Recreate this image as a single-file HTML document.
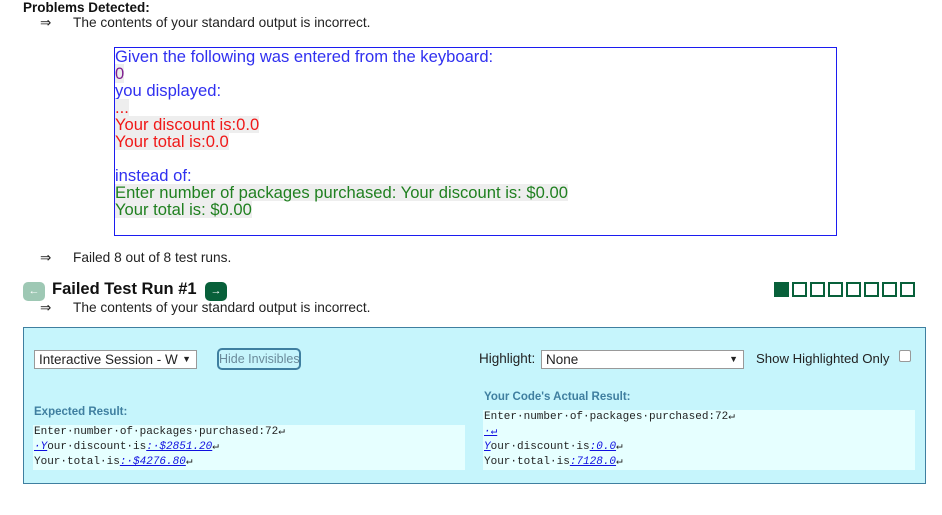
<!DOCTYPE html>
<html><head><style>
*{margin:0;padding:0;box-sizing:border-box}
body{width:942px;height:515px;background:#fff;font-family:"Liberation Sans",sans-serif;color:#222;position:relative;overflow:hidden}
.a{position:absolute;white-space:nowrap}
.t{font-size:13.7px}
.box{left:114px;top:47px;width:723px;height:189px;border:1px solid #1c1cf0;font-size:16.6px;line-height:17px;padding-top:0}
.box div{height:17px}
.bl{color:#3030f0}
.rd{color:#f01818;background:#eee;display:inline-block}
.gr{color:#208020;background:#eee;display:inline-block}
.mono{font-family:"Liberation Mono",monospace;font-size:11px;line-height:15px;background:#e6ffff;color:#222;padding-left:1px}
.u{color:#1010e0;text-decoration:underline;font-style:italic}
.lbl{font-size:11.5px;font-weight:bold;color:#3f7fa0}
.sq{position:absolute;top:282px;width:15px;height:15px;border:2px solid #08603a}
</style></head><body>
<div class="a" style="left:23px;top:0px;font-size:13.5px;font-weight:bold;color:#111">Problems Detected:</div>
<div class="a t" style="left:40px;top:15px">⇒</div>
<div class="a t" style="left:73px;top:15px">The contents of your standard output is incorrect.</div>
<div class="a box">
<div class="bl">Given the following was entered from the keyboard:</div>
<div><span style="color:#802090;background:#eee">0</span></div>
<div class="bl">you displayed:</div>
<div><span class="rd">...</span></div>
<div><span class="rd">Your discount is:0.0</span></div>
<div><span class="rd">Your total is:0.0</span></div>
<div></div>
<div class="bl">instead of:</div>
<div><span class="gr">Enter number of packages purchased: Your discount is: $0.00</span></div>
<div><span class="gr">Your total is: $0.00</span></div>
</div>
<div class="a t" style="left:40px;top:250px">⇒</div>
<div class="a t" style="left:73px;top:250px">Failed 8 out of 8 test runs.</div>
<div class="a" style="left:23px;top:282px;width:22px;height:19px;border-radius:5px;background:#9ec8b4;color:#fff;font-size:11px;text-align:center;line-height:19px">←</div>
<div class="a" style="left:52px;top:280px;font-size:16.5px;font-weight:bold;color:#111">Failed Test Run #1</div>
<div class="a" style="left:205px;top:282px;width:22px;height:19px;border-radius:5px;background:#08603a;color:#fff;font-size:11px;text-align:center;line-height:19px">→</div>
<div class="sq" style="left:774px;background:#08603a"></div>
<div class="sq" style="left:792px"></div><div class="sq" style="left:810px"></div><div class="sq" style="left:828px"></div><div class="sq" style="left:846px"></div><div class="sq" style="left:864px"></div><div class="sq" style="left:882px"></div><div class="sq" style="left:900px"></div>
<div class="a t" style="left:40px;top:300px">⇒</div>
<div class="a t" style="left:73px;top:300px">The contents of your standard output is incorrect.</div>
<div class="a" style="left:23px;top:327px;width:903px;height:157px;background:#c6f5fc;border:1px solid #3f7fa0"></div>
<div class="a" style="left:34px;top:350px;width:163px;height:19px;background:#fff;border:1px solid #999;font-size:13.5px;line-height:17px;padding-left:4px">Interactive Session - W<span style="position:absolute;right:5px;font-size:9px">▼</span></div>
<div class="a" style="left:217px;top:348px;width:84px;height:22px;border:2px solid #3f7fa0;border-radius:5px;font-size:12.5px;color:#6a8a9a;text-align:center;line-height:18px">Hide Invisibles</div>
<div class="a" style="left:479px;top:351px;font-size:13.5px">Highlight:</div>
<div class="a" style="left:541px;top:350px;width:203px;height:19px;background:#fff;border:1px solid #999;font-size:13.5px;line-height:17px;padding-left:4px">None<span style="position:absolute;right:5px;font-size:9px">▼</span></div>
<div class="a" style="left:756px;top:351px;font-size:13.2px">Show Highlighted Only</div>
<div class="a" style="left:899px;top:350px;width:12px;height:12px;background:#fff;border:1px solid #999;border-radius:2px"></div>
<div class="a lbl" style="left:34px;top:406px">Expected Result:</div>
<div class="a mono" style="left:33px;top:425px;width:432px;height:45px">Enter·number·of·packages·purchased:72↵<br><span class="u">·Y</span>our·discount·is<span class="u">:·$2851.20</span>↵<br>Your·total·is<span class="u">:·$4276.80</span>↵</div>
<div class="a lbl" style="left:484px;top:391px">Your Code's Actual Result:</div>
<div class="a mono" style="left:483px;top:410px;width:432px;height:60px">Enter·number·of·packages·purchased:72↵<br><span class="u">·↵</span><br><span class="u">Y</span>our·discount·is<span class="u">:0.0</span>↵<br>Your·total·is<span class="u">:7128.0</span>↵</div>
</body></html>
